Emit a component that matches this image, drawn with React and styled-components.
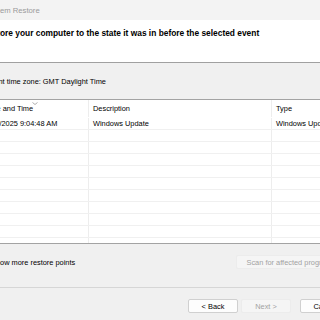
import React from "react";
import styled, { createGlobalStyle } from "styled-components";

const GlobalStyle = createGlobalStyle`
  html, body {
    margin: 0;
    padding: 0;
    background: #f0f0f0;
    overflow: hidden;
  }
  body {
    font-family: "Liberation Sans", Arial, sans-serif;
    font-size: 7.4px;
    color: #000;
  }
`;

const Window = styled.div`
  width: 390px;
  height: 320px;
  margin-left: -30px;
  display: flex;
  flex-direction: column;
  background: #f0f0f0;
`;

const TitleBar = styled.div`
  height: 20px;
  display: flex;
  align-items: center;
  gap: 4px;
  padding-left: 3px;
  background: #f3f3f3;
  color: #9a9a9a;
  font-size: 7.7px;
`;

const TitleIcon = styled.div`
  width: 8px;
  height: 8px;
  border-radius: 2px;
  background: #4a90d9;
`;

const Header = styled.div`
  height: 43px;
  box-sizing: border-box;
  padding: 8px 0 0 11.8px;
  background: #fff;
  border-bottom: 1px solid #a0a0a0;
  font-weight: bold;
  font-size: 8.4px;
`;

const Body = styled.div`
  display: flex;
  flex-direction: column;
  padding: 0 14px 0 10px;
`;

const ZoneLine = styled.div`
  height: 36px;
  display: flex;
  align-items: center;
`;

const Table = styled.div`
  position: relative;
  height: 145px;
  box-sizing: border-box;
  border: 1px solid #a3a3a3;
  background: #fff;
  overflow: hidden;
`;

const Row = styled.div`
  display: grid;
  grid-template-columns: 107px 183px 1fr;
  height: ${(p) => (p.$head ? "18px" : "12px")};
  box-sizing: border-box;
  border-bottom: 1px solid ${(p) => (p.$head ? "transparent" : "#f0f0f0")};
`;

const Cell = styled.div`
  display: flex;
  align-items: center;
  padding-left: 4px;
  white-space: nowrap;
  overflow: hidden;
  border-left: ${(p) => (p.$first ? "none" : "1px solid #ededed")};
`;

const SortMark = styled.svg`
  position: absolute;
  left: 51px;
  top: 2px;
`;

const OptionRow = styled.div`
  height: 43px;
  box-sizing: border-box;
  padding-top: 11px;
  display: flex;
  align-items: flex-start;
  justify-content: space-between;
`;

const CheckLabel = styled.label`
  height: 14px;
  display: flex;
  align-items: center;
  gap: 2px;
`;

const Check = styled.span`
  width: 7px;
  height: 7px;
  border: 1px solid #333;
  background: #fff;
`;

const Footer = styled.div`
  flex: 1;
  border-top: 1px solid #d6d6d6;
  display: flex;
  align-items: flex-start;
  justify-content: flex-end;
  padding: 11px 10px 0 0;
  gap: 3px;
`;

const Button = styled.div`
  width: ${(p) => p.$w || 50}px;
  height: 14px;
  box-sizing: border-box;
  display: flex;
  align-items: center;
  justify-content: center;
  border-radius: 2px;
  border: 1px solid ${(p) => (p.$disabled ? "#ececec" : "#d0d0d0")};
  background: ${(p) => (p.$disabled ? "#f5f5f5" : "#fdfdfd")};
  color: ${(p) => (p.$disabled ? "#a2a2a2" : "#000")};
  margin-left: ${(p) => p.$gap || 0}px;
`;

const rows = [
  ["6/10/2025 9:04:48 AM", "Windows Update", "Windows Update"],
  ...Array.from({ length: 10 }, () => ["", "", ""]),
];

export default function App() {
  return (
    <>
      <GlobalStyle />
      <Window>
        <TitleBar>
          <TitleIcon />
          System Restore
        </TitleBar>
        <Header>Restore your computer to the state it was in before the selected event</Header>
        <Body>
          <ZoneLine>Current time zone: GMT Daylight Time</ZoneLine>
          <Table>
            <SortMark width="6" height="3" viewBox="0 0 6 3">
              <path d="M0.5 0.5 L3 2.5 L5.5 0.5" fill="none" stroke="#9a9a9a" strokeWidth="0.8" />
            </SortMark>
            <Row $head>
              <Cell $first>Date and Time</Cell>
              <Cell>Description</Cell>
              <Cell>Type</Cell>
            </Row>
            {rows.map((r, i) => (
              <Row key={i}>
                <Cell $first>{r[0]}</Cell>
                <Cell>{r[1]}</Cell>
                <Cell>{r[2]}</Cell>
              </Row>
            ))}
          </Table>
          <OptionRow>
            <CheckLabel>
              <Check />
              Show more restore points
            </CheckLabel>
            <Button $w={110} $disabled>Scan for affected programs</Button>
          </OptionRow>
        </Body>
        <Footer>
          <Button>&lt; Back</Button>
          <Button $disabled>Next &gt;</Button>
          <Button $gap={6}>Cancel</Button>
        </Footer>
      </Window>
    </>
  );
}
